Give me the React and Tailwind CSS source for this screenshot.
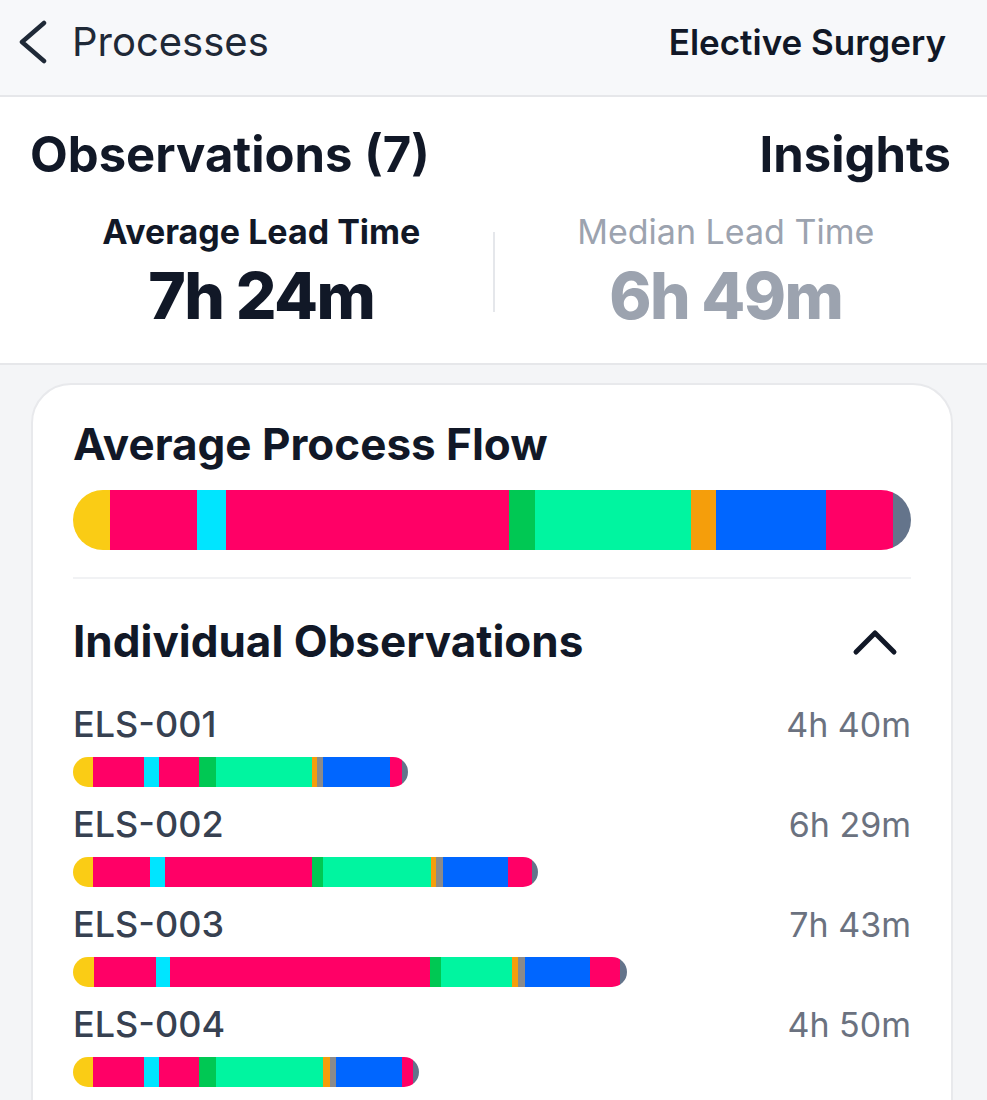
import React from 'react';

const COLORS = {
  Y: '#facc15',
  P: '#ff0066',
  C: '#00e5ff',
  G: '#00c853',
  M: '#00f5a0',
  O: '#f59e0b',
  N: '#8a8a8a',
  B: '#0066ff',
  S: '#64748b',
};

// segment widths in px, measured from the flow chart
const averageFlow = [
  ['Y', 37], ['P', 87], ['C', 29], ['P', 284], ['G', 26], ['M', 156],
  ['O', 25], ['B', 110], ['P', 67], ['S', 18],
];

const observations = [
  {
    id: 'ELS-001',
    time: '4h 40m',
    width: 335,
    segments: [['Y', 20], ['P', 51], ['C', 15], ['P', 40], ['G', 17], ['M', 96], ['O', 5], ['N', 6], ['B', 67], ['P', 12], ['S', 6]],
  },
  {
    id: 'ELS-002',
    time: '6h 29m',
    width: 465,
    segments: [['Y', 20], ['P', 57], ['C', 15], ['P', 147], ['G', 11], ['M', 108], ['O', 5], ['N', 7], ['B', 65], ['P', 24], ['S', 6]],
  },
  {
    id: 'ELS-003',
    time: '7h 43m',
    width: 554,
    segments: [['Y', 21], ['P', 62], ['C', 14], ['P', 260], ['G', 11], ['M', 71], ['O', 6], ['N', 7], ['B', 65], ['P', 30], ['S', 7]],
  },
  {
    id: 'ELS-004',
    time: '4h 50m',
    width: 346,
    segments: [['Y', 20], ['P', 51], ['C', 15], ['P', 40], ['G', 17], ['M', 107], ['O', 7], ['N', 6], ['B', 66], ['P', 11], ['S', 6]],
  },
];

const FlowBar = ({ segments, className, width }) => (
  <div className={`flex overflow-hidden rounded-full ${className}`} style={width ? { width } : undefined}>
    {segments.map(([c, w], i) => (
      <div key={i} className="basis-0 h-full" style={{ flexGrow: w, backgroundColor: COLORS[c] }} />
    ))}
  </div>
);

const App = () => {
  return (
    <div className="min-h-screen bg-[#f4f5f7] font-['Inter',sans-serif] text-[#111827]">
      {/* Nav bar */}
      <div className="flex items-center justify-between h-[97px] pb-3 pl-[18px] pr-[41px] bg-[#f7f8fa] border-b-2 border-[#e6e7ea]">
        <div className="flex items-center">
          <svg width="30" height="44" viewBox="0 0 30 44" fill="none" className="mr-[24px]">
            <polyline points="26,3 4,22 26,41" stroke="#1f2937" strokeWidth="4.5" strokeLinecap="round" strokeLinejoin="round" />
          </svg>
          <span className="text-[40px] leading-[40px] text-[#1f2937]">Processes</span>
        </div>
        <span className="text-[35px] leading-[40px] font-semibold text-[#111827]">Elective Surgery</span>
      </div>

      {/* Summary */}
      <div className="bg-white border-b-2 border-[#e6e7ea] px-[30px] pt-[33px] pb-[35px]">
        <div className="flex items-baseline justify-between">
          <h1 className="text-[49px] leading-[50px] font-bold">Observations (7)</h1>
          <h2 className="text-[49px] leading-[50px] font-bold mr-[6px]">Insights</h2>
        </div>
        <div className="flex mt-[35px]">
          <div className="flex-1 flex flex-col items-center">
            <span className="text-[34px] leading-[34px] font-bold">Average Lead Time</span>
            <span className="mt-[15px] text-[64px] leading-[64px] font-extrabold tracking-tight">7h 24m</span>
          </div>
          <div className="w-[2px] h-[80px] self-center bg-[#e5e7eb]" />
          <div className="flex-1 flex flex-col items-center">
            <span className="text-[34px] leading-[34px] text-[#9ca3af]">Median Lead Time</span>
            <span className="mt-[15px] text-[64px] leading-[64px] font-extrabold tracking-tight text-[#9ca3af]">6h 49m</span>
          </div>
        </div>
      </div>

      {/* Flow card */}
      <div className="ml-[31px] mr-[34px] mt-[18px] bg-white border-2 border-[#e8e9ec] rounded-[40px] px-[40px] pt-[37px] pb-[60px]">
        <h3 className="text-[44px] leading-[44px] font-bold">Average Process Flow</h3>
        <FlowBar segments={averageFlow} className="mt-[24px] h-[60px]" />
        <div className="mt-[27px] h-[2px] bg-[#f1f2f4]" />

        <div className="flex items-center justify-between mt-[40px]">
          <h3 className="text-[44px] leading-[44px] font-bold">Individual Observations</h3>
          <svg width="48" height="32" viewBox="0 0 48 32" fill="none" className="mr-[12px]">
            <polyline points="5,27 24,8 43,27" stroke="#111827" strokeWidth="5" strokeLinecap="round" strokeLinejoin="round" />
          </svg>
        </div>

        <div className="mt-[44px] flex flex-col gap-[20px]">
          {observations.map((o) => (
            <div key={o.id}>
              <div className="flex items-baseline justify-between">
                <span className="text-[36px] leading-[34px] font-medium text-[#374151]">{o.id}</span>
                <span className="text-[34px] leading-[34px] text-[#6b7280]">{o.time}</span>
              </div>
              <FlowBar segments={o.segments} width={o.width} className="mt-[15px] h-[30px]" />
            </div>
          ))}
        </div>
      </div>
    </div>
  );
};

export default App;
